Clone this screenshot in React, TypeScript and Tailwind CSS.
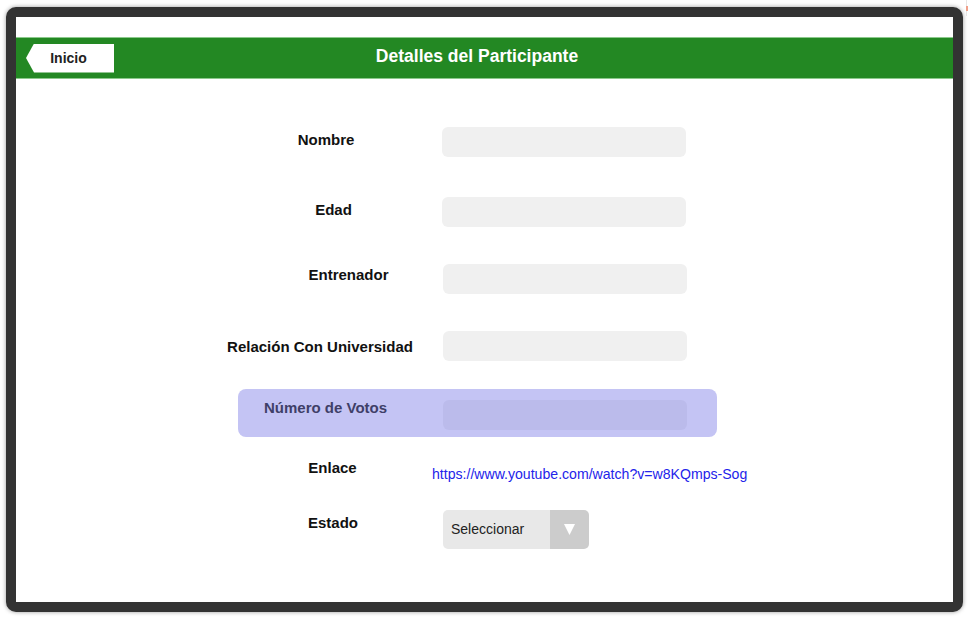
import React from "react";

function Input({ className = "" }: { className?: string }) {
  return <div className={`h-[30px] w-[244px] rounded-[6px] bg-[#f0f0f0] ${className}`} />;
}

export default function App() {
  return (
    <div className="relative h-[619px] w-[969px] overflow-hidden bg-white [font-family:'Liberation_Sans',Arial,sans-serif]">
      <div className="absolute right-[2px] top-0 h-[16px] w-px bg-[#e6e6e6]" />
      <div className="absolute right-[1px] top-[6px] h-[5px] w-[2px] bg-[#f0a08a]" />
      <div className="ml-[6px] mt-[7px] flex h-[605px] w-[957px] flex-col rounded-[10px] border-[10px] border-[#333333] bg-white shadow-[0_0_4px_rgba(0,0,0,0.4)]">
        {/* Header */}
        <div className="mt-[20px] flex h-[42px] items-center border-y border-[#8cc98c] bg-[#238823]">
          <div className="ml-[10px] flex h-[29px] w-[88px] items-center justify-center bg-white pr-[3px] [clip-path:polygon(8px_0,100%_0,100%_100%,8px_100%,0_50%)]">
            <span className="text-[14px] font-bold leading-[16px] text-[#222222]">Inicio</span>
          </div>
          <div className="mb-[5px] mr-[113px] flex-1 text-center text-[17.5px] font-bold leading-[20px] text-white">
            Detalles del Participante
          </div>
        </div>

        {/* Form */}
        <div className="flex flex-col text-[15px] font-bold leading-[17px] text-[#111111]">
          <div className="mt-[48px] flex items-start">
            <div className="ml-[200px] mt-[4px] w-[220px] text-center">Nombre</div>
            <Input className="ml-[6px]" />
          </div>
          <div className="mt-[40px] flex items-start">
            <div className="ml-[200px] mt-[4px] w-[220px] pl-[15px] text-center">Edad</div>
            <Input className="ml-[6px]" />
          </div>
          <div className="mt-[37px] flex items-start">
            <div className="ml-[200px] mt-[2px] w-[220px] pl-[45px] text-center">Entrenador</div>
            <Input className="ml-[7px]" />
          </div>
          <div className="mt-[37px] flex items-start">
            <div className="ml-[200px] mt-[7px] w-[220px] pr-[12px] text-center">Relación Con Universidad</div>
            <Input className="ml-[7px]" />
          </div>
          <div className="ml-[222px] mt-[28px] flex h-[48px] w-[479px] items-start rounded-[8px] bg-[#c4c4f4]">
            <div className="mt-[10px] w-[205px] pl-[26px] text-[#3f3f68]">Número de Votos</div>
            <div className="mt-[11px] h-[30px] w-[244px] rounded-[6px] bg-[#bbbbeb]" />
          </div>
          <div className="mt-[22px] flex h-[24px] items-start">
            <div className="ml-[200px] w-[216px] pl-[17px] text-center">Enlace</div>
            <a className="mt-[7px] text-[14.1px] font-normal leading-[16px] text-[#2323ea]">
              https://www.youtube.com/watch?v=w8KQmps-Sog
            </a>
          </div>
          <div className="mt-[27px] flex items-start">
            <div className="ml-[200px] mt-[4px] w-[220px] pl-[14px] text-center">Estado</div>
            <div className="ml-[7px] flex h-[39px] w-[146px] overflow-hidden rounded-[5px]">
              <div className="flex flex-1 items-center bg-[#e8e8e8] pl-[8px] text-[14px] font-normal text-[#222222]">
                Seleccionar
              </div>
              <div className="flex w-[39px] items-center justify-center bg-[#cccccc]">
                <svg width="11" height="11" viewBox="0 0 11 11">
                  <polygon points="0,0 11,0 5.5,11" fill="#ffffff" />
                </svg>
              </div>
            </div>
          </div>
        </div>
      </div>
    </div>
  );
}
